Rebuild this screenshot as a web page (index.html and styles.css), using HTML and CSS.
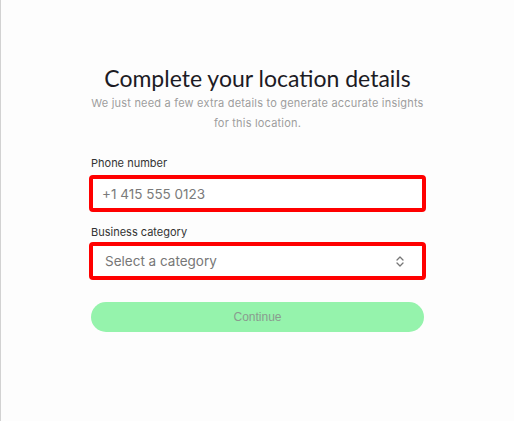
FILE: index.html
```html
<!DOCTYPE html>
<html lang="en">
<head>
    <meta charset="UTF-8">
    <meta name="viewport" content="width=device-width, initial-scale=1.0">
    <title>Location details</title>
    <link rel="stylesheet" href="styles.css">
</head>
<body>
    <main class="page">
        <form class="details-form">
            <h1>Complete your location details</h1>
            <p class="intro">We just need a few extra details to generate accurate insights for this location.</p>

            <label class="field-label" for="phone">Phone number</label>
            <input type="text" id="phone" class="field highlight" placeholder="+1 415 555 0123">

            <label class="field-label" for="category">Business category</label>
            <div class="select-wrap highlight">
                <select id="category" class="field select">
                    <option value="">Select a category</option>
                </select>
                <svg class="chevrons" width="8" height="11" viewBox="0 0 8 11" fill="none" stroke="#777" stroke-width="1.3" stroke-linecap="round" stroke-linejoin="round">
                    <path d="M1 4 L4 1 L7 4"/>
                    <path d="M1 7 L4 10 L7 7"/>
                </svg>
            </div>

            <button type="button" class="continue" disabled>Continue</button>
        </form>
    </main>
</body>
</html>
```

FILE: styles.css
```css
* { margin: 0; padding: 0; box-sizing: border-box; }
html, body { height: 100%; }
body {
    background: #fdfdfd;
    border-left: 1px solid #d2d2d2;
    font-family: "Inter", "Liberation Sans", sans-serif;
    color: #2a2a2a;
}
.page {
    display: flex;
    justify-content: center;
    padding-top: 64px;
}
.details-form {
    width: 333px;
    display: flex;
    flex-direction: column;
}
h1 {
    font-family: "Lato", "Inter", sans-serif;
    font-weight: 400;
    font-size: 23px;
    line-height: 28px;
    text-align: center;
    color: #1c1b24;
    margin-bottom: 1px;
}
.intro {
    font-size: 11px;
    letter-spacing: 0.2px;
    line-height: 20px;
    text-align: center;
    color: #9d9d9d;
    margin: 0 -8px 22px;
}
.field-label {
    font-size: 11px;
    line-height: 16px;
    color: #333;
    margin-bottom: 6px;
}
.field {
    width: 100%;
    height: 33px;
    border: 1px solid #ddd;
    border-radius: 2px;
    background: #fff;
    font-family: inherit;
    font-size: 13.5px;
    color: #777;
    padding: 0 10px;
}
.field::placeholder { color: #7a7a7a; }
#phone { margin-bottom: 14px; }
.highlight {
    outline: 4px solid #ff0000;
    outline-offset: -2px;
}
.select-wrap {
    position: relative;
    margin-top: -2px;
    border-radius: 2px;
}
.select {
    height: 34px;
    appearance: none;
    padding-left: 13px;
    outline: none;
}
.chevrons {
    position: absolute;
    right: 20px;
    top: 12px;
    pointer-events: none;
}
.continue {
    margin-top: 24px;
    height: 30px;
    border: none;
    border-radius: 15px;
    background: #95f3ac;
    color: #8a9b8f;
    font-family: "Liberation Sans", sans-serif;
    font-size: 12px;
}
```
